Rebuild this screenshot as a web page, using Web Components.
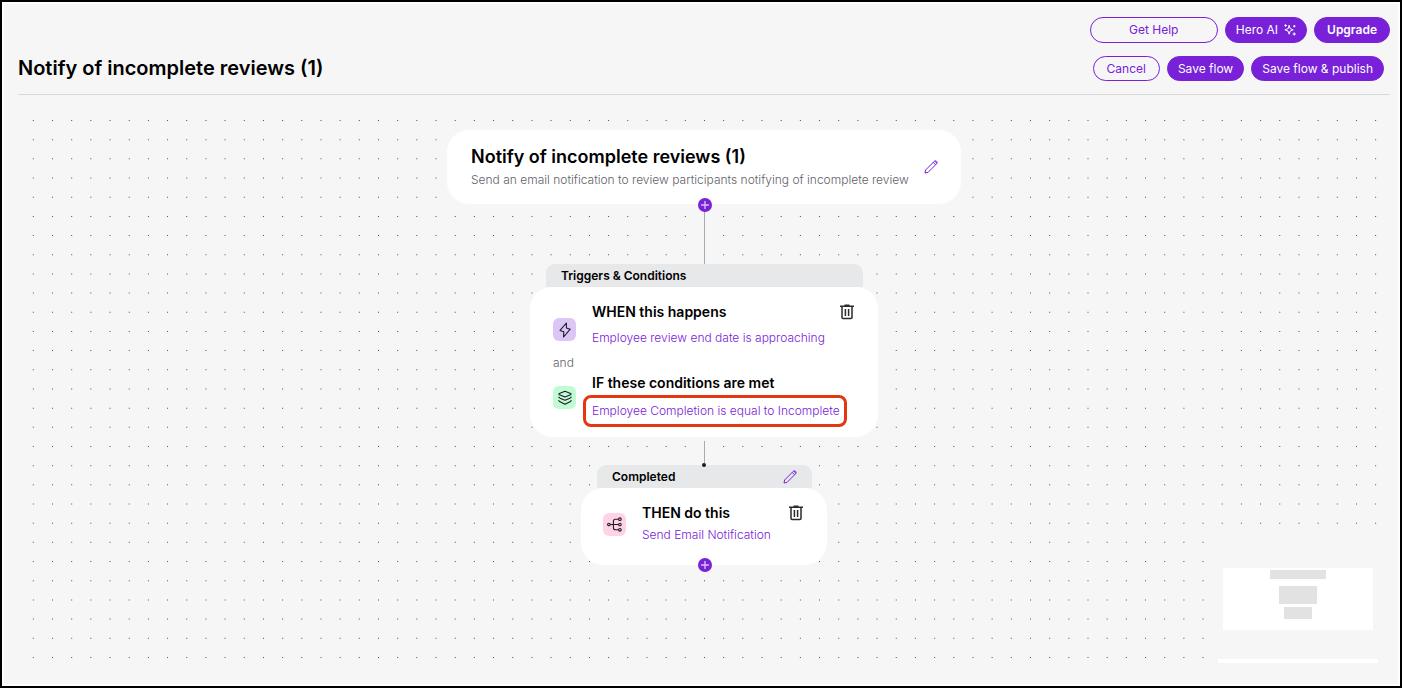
<!DOCTYPE html>
<html lang="en">
<head>
<meta charset="utf-8">
<title>Notify of incomplete reviews (1)</title>
<style>
  body { margin: 0; font-family: Inter, "Liberation Sans", sans-serif; color: #000; }
</style>
</head>
<body>
<flow-page></flow-page>
<script>
const ICONS = {
  sparkle: [12, 12, '<g fill="none" stroke="currentColor" stroke-linejoin="round" stroke-linecap="round"><path d="M5.2 1.6 6.2 4.6 9.2 5.8 6.2 7 5.2 10.2 4 7 .9 5.8 4 4.6Z"/><path d="M1.6.6v1.8M.7 1.5h1.8M10.3 1.4v1.6M9.5 2.2h1.6M10.2 8.8v2.4M9 10h2.4"/></g>'],
  pencil: [14, 14, '<g fill="none" stroke="currentColor" stroke-linejoin="round"><path d="M1 13 1.6 10 10.2 1.4Q11.5.3 12.7 1.4 13.7 2.6 12.6 3.8L4 12.4Z"/><path d="M9.2 2.4 11.6 4.8M10.6 1 13 3.4"/></g>'],
  trash: [14, 16, '<g fill="none" stroke="currentColor" stroke-width="1.5"><path d="M0 2.2h14M4.5 1.2h5"/><path d="M2 2.5v11q0 1 1 1h8q1 0 1-1v-11" /><path d="M5.4 5v7M8.6 5v7"/></g>'],
  bolt: [14, 16, '<path d="M8.4 1 2 8.4 5.8 9.8 5.6 15 12.2 7.2 8.4 6Z" fill="none" stroke="currentColor" stroke-width="1.1" stroke-linejoin="round"/>'],
  layers: [14, 16, '<g fill="none" stroke="currentColor" stroke-width="1.1" stroke-linejoin="round" stroke-linecap="round"><path d="M7 1.2 12.6 3.4Q13.6 4 12.6 4.7L7 7 1.4 4.7Q.4 4 1.4 3.4Z"/><path d="M.8 7.2 2 8.2 7 10.2 12 8.2 13.2 7.2M.8 10.6 2 11.8 7 14.2 12 11.8 13.2 10.6"/></g>'],
  branch: [15, 15, '<g fill="none" stroke="currentColor" stroke-width="1.1"><circle cx="1.9" cy="7.5" r="1.3"/><circle cx="12.9" cy="2.2" r="1.3"/><circle cx="12.9" cy="7.5" r="1.3"/><circle cx="12.9" cy="12.8" r="1.3"/><path d="M3.2 7.5h8.4M11.6 2.2H8.4Q6.4 2.2 6.4 4.2v6.6q0 2 2 2h3.2"/></g>'],
  plus: [14, 14, '<path d="M7 3v8M3 7h8" stroke="#d9bdf5" stroke-width="1.4" fill="none"/>']
};

function define(name, html, setup) {
  const template = document.createElement('template');
  template.innerHTML = html;
  customElements.define(name, class extends HTMLElement {
    connectedCallback() {
      if (this.shadowRoot) return;
      const root = this.attachShadow({ mode: 'open' });
      root.append(template.content.cloneNode(true));
      if (setup) setup(this, root);
    }
  });
}

define('flow-icon', `
  <style>:host { display: inline-flex; flex: none; } svg { display: block; }</style>
`, (host, root) => {
  const [w, h, body] = ICONS[host.getAttribute('name')];
  root.innerHTML += `<svg width="${w}" height="${h}" viewBox="0 0 ${w} ${h}" aria-hidden="true">${body}</svg>`;
});

define('pill-button', `
  <style>
    :host { display: flex; height: 25px; }
    button {
      flex: 1; display: flex; align-items: center; justify-content: center; gap: 6px;
      margin: 0; padding: 0 10px; border: 1px solid #7821d8; border-radius: 13px;
      background: #7821d8; color: #fff; font: 400 12px/16px Inter, sans-serif; white-space: nowrap; cursor: pointer;
    }
    :host([outline]) button { background: transparent; color: #7821d8; padding: 0 13px; }
    :host([tall]) { height: 26px; }
    :host([wide]) { width: 128px; }
    :host([strong]) button { font-weight: 600; padding: 0 12px; }
  </style>
  <button type="button"><slot></slot></button>
`);

define('icon-button', `
  <style>
    :host { display: inline-flex; flex: none; color: #7821d8; }
    button { display: flex; margin: 0; padding: 0; border: 0; background: none; color: inherit; cursor: pointer; }
    :host([kind="trash"]) { color: #2b2b2b; }
    :host([kind="plus"]) button { border-radius: 7px; background: #7821d8; }
  </style>
`, (host, root) => {
  root.innerHTML += `<button type="button" aria-label="${host.getAttribute('label')}"><flow-icon name="${host.getAttribute('kind')}"></flow-icon></button>`;
});

define('flow-header', `
  <style>
    :host { display: flex; flex-direction: column; gap: 13px; margin: 0 8px 0 14px; padding: 13px 0; border-bottom: 1px solid #d9d9d9; }
    .row { display: flex; align-items: center; justify-content: flex-end; gap: 7px; }
    .title { padding-right: 6px; }
    h1 { flex: 1; margin: 0; font-size: 20px; line-height: 25px; font-weight: 600; }
  </style>
  <div class="row">
    <pill-button outline wide tall>Get Help</pill-button>
    <pill-button tall>Hero AI <flow-icon name="sparkle"></flow-icon></pill-button>
    <pill-button strong tall>Upgrade</pill-button>
  </div>
  <div class="row title">
    <h1>Notify of incomplete reviews (1)</h1>
    <pill-button outline>Cancel</pill-button>
    <pill-button>Save flow</pill-button>
    <pill-button>Save flow &amp; publish</pill-button>
  </div>
`);

define('flow-summary', `
  <style>
    :host { position: relative; display: flex; box-sizing: border-box; width: 514px; height: 74px; padding: 0 23px 0 24px; align-items: center; justify-content: space-between; border-radius: 22px; background: #fff; }
    h2 { margin: 0; font-size: 18px; line-height: 26px; font-weight: 600; }
    p { margin: 0; font-size: 12px; line-height: 20px; font-weight: 300; color: #5f6268; white-space: nowrap; }
    .add { position: absolute; bottom: -8px; left: calc(50% - 6px); }
  </style>
  <div>
    <h2><slot name="title"></slot></h2>
    <p><slot></slot></p>
  </div>
  <icon-button kind="pencil" label="Edit flow details"></icon-button>
  <icon-button class="add" kind="plus" label="Add step"></icon-button>
`);

define('flow-connector', `
  <style>
    :host { display: flex; flex-direction: column; align-items: center; height: 60px; }
    .line { flex: 1; width: 1px; margin-left: 1px; background: #a9a9b0; }
    .dot { display: none; width: 4px; height: 4px; margin-bottom: -2px; border-radius: 2px; background: #1c1b2b; z-index: 1; }
    :host([dot]) { height: 24px; padding-top: 4px; }
    :host([dot]) .dot { display: block; }
  </style>
  <div class="line"></div><div class="dot"></div>
`);

define('flow-group', `
  <style>
    :host { position: relative; display: flex; flex-direction: column; align-items: stretch; width: 348px; }
    :host([small]) { width: 246px; }
    header { display: flex; align-items: center; justify-content: space-between; box-sizing: border-box; height: 23px; margin: 0 15px 0 16px; padding: 0 15px; border-radius: 9px 9px 0 0; background: #e7e8ea; }
    h2 { margin: 0; font-size: 12px; line-height: 16px; font-weight: 600; }
    .card { padding: 15px 24px 10px 23px; border-radius: 22px; background: #fff; }
    :host([small]) .card { padding: 15px 24px 20px 22px; }
    .add { position: absolute; bottom: -7px; left: calc(50% - 6px); display: flex; }
  </style>
  <header><h2><slot name="heading"></slot></h2><slot name="action"></slot></header>
  <div class="card"><slot></slot></div>
  <div class="add"><slot name="add"></slot></div>
`);

define('flow-step', `
  <style>
    :host { display: flex; gap: 16px; --tint: #dcc6f5; --space: 6px; --drop: 16px; }
    :host([tone="green"]) { --tint: #c1fbd3; --space: 2px; --drop: 13px; }
    :host([tone="pink"]) { --tint: #ffd3e6; --space: 2px; --drop: 10px; }
    .tile { display: flex; flex: none; align-items: center; justify-content: center; width: 23px; height: 23px; margin-top: var(--drop); border-radius: 6px; background: var(--tint); color: #1d1b26; }
    .body { flex: 1; display: flex; flex-direction: column; align-items: flex-start; gap: var(--space); min-width: 0; }
    .top { display: flex; align-self: stretch; justify-content: space-between; align-items: center; height: 20px; }
    h3 { margin: 0; font-size: 14px; line-height: 20px; font-weight: 600; white-space: nowrap; }
    a { font-size: 12px; line-height: 20px; font-weight: 300; color: #7821d8; text-decoration: none; white-space: nowrap; }
    :host([highlight]) a { margin-left: -9px; padding: 3px 4px 3px 6px; border: 3px solid #e2370f; border-radius: 8px; }
  </style>
  <div class="tile"></div>
  <div class="body">
    <div class="top"><h3><slot name="title"></slot></h3><slot name="action"></slot></div>
    <a href="#"><slot></slot></a>
  </div>
`, (host, root) => {
  root.querySelector('.tile').innerHTML = `<flow-icon name="${host.getAttribute('icon')}"></flow-icon>`;
});

define('flow-minimap', `
  <style>
    :host { display: flex; flex-direction: column; align-items: center; gap: 29px; box-sizing: border-box; width: 191px; height: 152px; padding: 36px 20px 0 11px; background: #f6f6f6; }
    svg { display: block; background: #fff; }
    .bar { width: 160px; height: 4px; background: #fff; }
  </style>
  <svg width="150" height="62" viewBox="0 0 150 62" fill="#e2e2e2" role="img" aria-label="Flow overview">
    <rect x="47" y="2" width="56" height="9"/><rect x="56" y="18" width="38" height="18"/><rect x="61" y="39" width="28" height="12"/>
  </svg>
  <div class="bar"></div>
`);

define('flow-dots', `
  <style>
    :host { display: block; overflow: hidden; }
    svg { display: block; width: 100%; height: 100%; }
  </style>
  <svg aria-hidden="true"><path fill="#7821d8"/></svg>
`, (host, root) => {
  // One-unit squares on a regular grid that fills the canvas.
  const step = 19.176;
  const draw = () => {
    let d = '';
    for (let y = 25; y < host.clientHeight - 20; y += step)
      for (let x = 48 - step; x < host.clientWidth - 16; x += step)
        d += `M${x.toFixed(2)} ${y.toFixed(2)}h1v1h-1z`;
    root.querySelector('path').setAttribute('d', d);
  };
  draw();
  new ResizeObserver(draw).observe(host);
});

define('flow-canvas', `
  <style>
    :host { position: relative; flex: 1; display: flex; flex-direction: column; align-items: center; padding: 35px 8px 35px 14px; }
    flow-dots { position: absolute; inset: 0; }
    flow-minimap { position: absolute; right: 0; bottom: 0; }
    .flow { position: relative; display: flex; flex-direction: column; align-items: center; }
    .and { margin: 5px 0 0; font-size: 12px; line-height: 20px; font-weight: 300; color: #5f6268; }
  </style>
  <flow-dots></flow-dots>
  <flow-minimap></flow-minimap>
  <div class="flow">
    <flow-summary><span slot="title">Notify of incomplete reviews (1)</span>Send an email notification to review participants notifying of incomplete review</flow-summary>
    <flow-connector></flow-connector>
    <flow-group>
      <span slot="heading">Triggers &amp; Conditions</span>
      <flow-step icon="bolt"><span slot="title">WHEN this happens</span><icon-button slot="action" kind="trash" label="Delete trigger"></icon-button>Employee review end date is approaching</flow-step>
      <p class="and">and</p>
      <flow-step icon="layers" tone="green" highlight><span slot="title">IF these conditions are met</span>Employee Completion is equal to Incomplete</flow-step>
    </flow-group>
    <flow-connector dot></flow-connector>
    <flow-group small>
      <span slot="heading">Completed</span>
      <icon-button slot="action" kind="pencil" label="Edit branch"></icon-button>
      <flow-step icon="branch" tone="pink"><span slot="title">THEN do this</span><icon-button slot="action" kind="trash" label="Delete action"></icon-button>Send Email Notification</flow-step>
      <icon-button slot="add" kind="plus" label="Add action"></icon-button>
    </flow-group>
  </div>
`);

define('flow-page', `
  <style>
    :host { display: flex; box-sizing: border-box; min-height: 100vh; border: 2px solid #000; }
    main { flex: 1; display: flex; flex-direction: column; border: 2px solid #fff; background: #f6f6f6; }
  </style>
  <main><flow-header></flow-header><flow-canvas></flow-canvas></main>
`);
</script>
</body>
</html>
